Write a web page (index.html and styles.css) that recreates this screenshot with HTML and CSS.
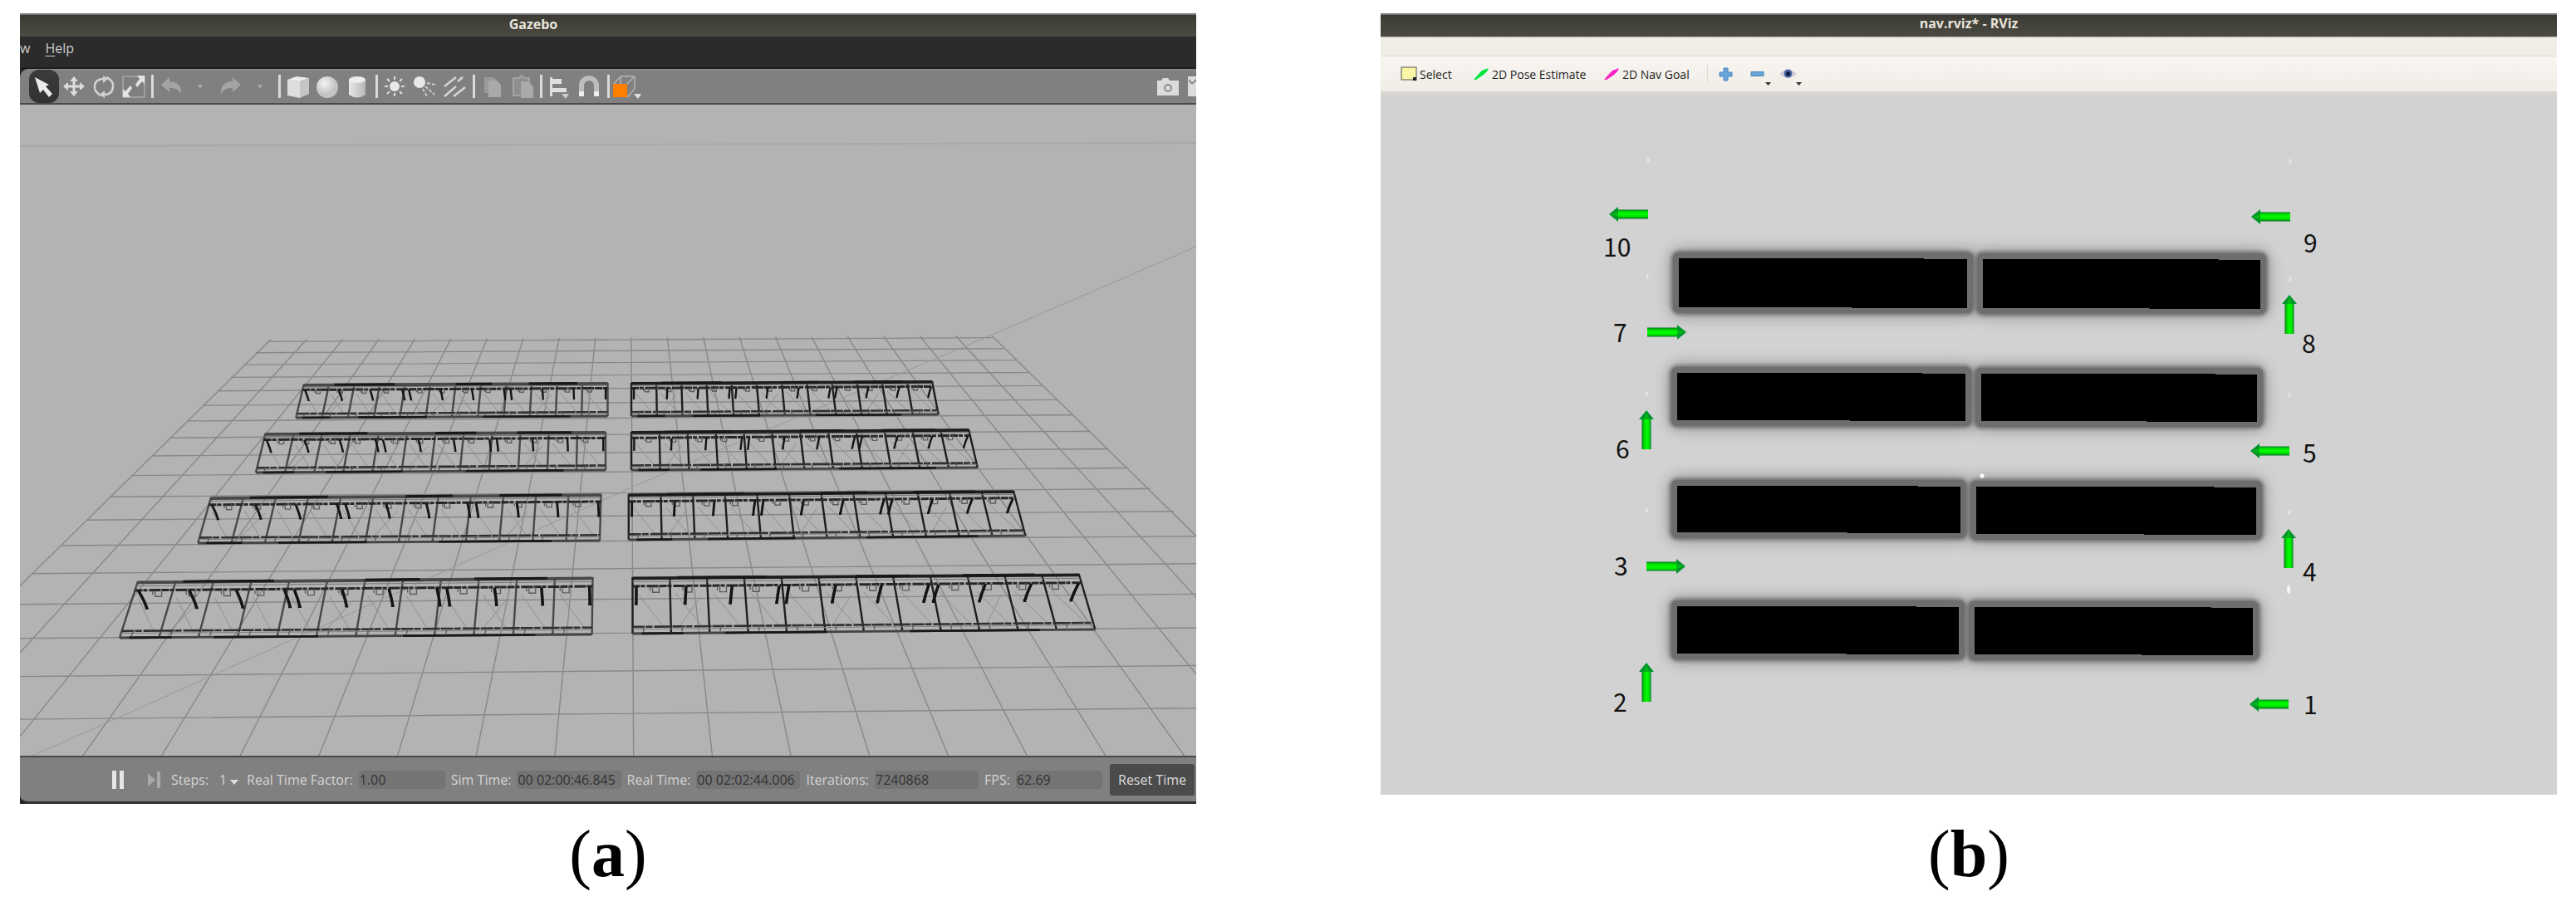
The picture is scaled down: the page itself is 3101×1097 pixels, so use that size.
FILE: index.html
```html
<!DOCTYPE html>
<html lang="en">
<head>
<meta charset="utf-8">
<title>Gazebo world and RViz map</title>
<link rel="stylesheet" href="styles.css">
</head>
<body>
<main class="figures">
  <figure class="figure">
    <section class="window gazebo" aria-label="Gazebo">
      <header class="titlebar titlebar-gazebo">Gazebo</header>
      <nav class="menubar"><a class="menu" href="#">w</a><a class="menu" href="#"><u>H</u>elp</a></nav>
      <div class="gz-shell">
      <div class="gz-toolbar">
        <div class="group">
          <button class="tool active" aria-label="Select"><svg viewBox="0 0 36 40"><path d="M7 9 24 18 20 20 28 29 24 33 17 24 13 28Z" fill="#ececec"/></svg></button>
          <button class="tool" aria-label="Translate"><svg viewBox="0 0 36 40"><g fill="#ddd"><path d="M18 8 23 14H13ZM18 32 23 26H13ZM5 20 11 15V25ZM31 20 25 15V25Z"/><path d="M16.500 12h3v16h-3zM9 18.500h18v3H9z"/></g></svg></button>
          <button class="tool" aria-label="Rotate"><svg viewBox="0 0 36 40" fill="none" stroke="#d2d2d2" stroke-width="2.500"><path d="M15 31Q6 27 7 19Q8 11 18 11M21 9Q30 13 29 21Q28 30 18 30"/><path d="M17 7 23 11 17 16ZM19 25 13 30 19 34Z" fill="#d2d2d2" stroke="none"/></svg></button>
          <button class="tool" aria-label="Scale"><svg viewBox="0 0 36 40"><path d="M5 8H31V33H5Z" fill="none" stroke="#a8a8a8" stroke-width="1.500"/><path d="M31 7V17L28 14 22 21 20 18 25 11 22 7ZM5 33V23L8 26 14 19 16 22 11 29 14 33Z" fill="#e4e4e4"/></svg></button>
        </div>
        <i class="sep"></i>
        <div class="group">
          <button class="tool" aria-label="Undo"><svg viewBox="0 0 36 40"><path d="M6 18 16 9V14Q31 15 30 29Q26 21 16 22V27Z" fill="#a4a4a4"/></svg></button>
          <button class="tool" aria-label="Undo history"><svg viewBox="0 0 36 40"><path d="M14 18h6l-3 5z" fill="#a9a9a9"/></svg></button>
          <button class="tool" aria-label="Redo"><svg viewBox="0 0 36 40"><path d="M30 18 20 9V14Q5 15 6 29Q10 21 20 22V27Z" fill="#a4a4a4"/></svg></button>
          <button class="tool" aria-label="Redo history"><svg viewBox="0 0 36 40"><path d="M14 18h6l-3 5z" fill="#a9a9a9"/></svg></button>
        </div>
        <i class="sep"></i>
        <div class="group">
          <button class="tool" aria-label="Box"><svg viewBox="0 0 36 40"><path d="M5 12 20 14V34L5 31Z" fill="#dedede"/><path d="M5 12 16 8 31 10 20 14Z" fill="#ededed"/><path d="M20 14 31 10V29L20 34Z" fill="#c6c6c6"/></svg></button>
          <button class="tool" aria-label="Sphere"><svg viewBox="0 0 36 40"><ellipse cx="17" cy="21" rx="13" ry="13" fill="url(#ball)"/></svg></button>
          <button class="tool" aria-label="Cylinder"><svg viewBox="0 0 36 40"><path d="M7 12V30Q17 37 27 30V12Z" fill="url(#tube)"/><ellipse cx="17" cy="12" rx="10" ry="4" fill="#ededed"/></svg></button>
        </div>
        <i class="sep"></i>
        <div class="group">
          <button class="tool" aria-label="Point light"><svg viewBox="0 0 36 40"><circle cx="17" cy="20" r="6" fill="#e8e8e8"/><path d="M17 8v4M17 28v4M5 20h4M25 20h4M8 11l3 3M23 26l3 3M26 11l-3 3M11 26l-3 3" stroke="#ddd" stroke-width="2"/></svg></button>
          <button class="tool" aria-label="Spot light"><svg viewBox="0 0 36 40"><circle cx="11" cy="15" r="7" fill="#e8e8e8"/><path d="M18 20 29 30M15 23 20 32M20 16 30 18" stroke="#ccc" stroke-width="2" stroke-dasharray="4 2"/></svg></button>
          <button class="tool" aria-label="Directional light"><svg viewBox="0 0 36 40"><path d="M5 20 19 9M5 32 19 20M16 32 30 21M21 14 27 9" stroke="#d5d5d5" stroke-width="2.500"/></svg></button>
        </div>
        <i class="sep"></i>
        <div class="group">
          <button class="tool" aria-label="Copy"><svg viewBox="0 0 36 40"><path d="M8 9h11l4 4v15H8Z" fill="#9b9b9b"/><path d="M13 13h10l5 5v15H13Z" fill="#a9a9a9"/></svg></button>
          <button class="tool" aria-label="Paste"><svg viewBox="0 0 36 40"><path d="M7 10h7l3-3 3 3h6V31H7Z" fill="#8e8e8e" stroke="#a3a3a3" stroke-width="2"/><path d="M16 14h9l6 6v14H16Z" fill="#a9a9a9"/></svg></button>
        </div>
        <i class="sep"></i>
        <div class="group">
          <button class="tool" aria-label="Align"><svg viewBox="0 0 36 40"><path d="M6 9h3v23H6zM9 11h11v6H9zM9 22h17v5H9z" fill="#e0e0e0"/><path d="M20 29h9l-4 6z" fill="#ccc"/></svg></button>
          <button class="tool" aria-label="Snap"><svg viewBox="0 0 36 40"><path d="M8 26V19a9 9 0 0 1 18 0V26" fill="none" stroke="#bdbdbd" stroke-width="6"/><path d="M5 26h6v6H5zM23 26h6v6h-6z" fill="#ededed"/></svg></button>
        </div>
        <i class="sep"></i>
        <div class="group">
          <button class="tool" aria-label="View angle"><svg viewBox="0 0 36 40"><path d="M2 17 10 8H27V23L18 33M18 17 27 8M10 8V17" fill="none" stroke="#b4b4b4" stroke-width="1.500"/><path d="M1 17h17v16H1z" fill="#ff8000"/><path d="M26 29h9l-4 6z" fill="#e0e0e0"/></svg></button>
        </div>
        <div class="group group-end">
          <button class="tool" aria-label="Screenshot"><svg viewBox="0 0 36 40"><path d="M5 13h5l2-3h6l2 3h11v18H5Z" fill="#dcdcdc"/><circle cx="18" cy="22" r="4" fill="none" stroke="#8d8d8d" stroke-width="2"/></svg></button>
          <button class="tool tool-cut" aria-label="Record video"><svg viewBox="0 0 36 40"><path d="M6 8h30v24H6z" fill="#dcdcdc"/><path d="M8 12q1 5 4 4l4-4" fill="none" stroke="#888" stroke-width="2"/></svg></button>
        </div>
      </div>
      <svg class="scene" id="world" viewBox="24 126 1416 784" role="img" aria-label="Simulated racks on a ground grid"></svg>
      <footer class="statusbar">
        <button class="play" aria-label="Pause"><svg viewBox="0 0 16 22"><path d="M1 0h5v22H1zM10 0h5v22h-5z" fill="#e6e6e6"/></svg></button>
        <button class="play step" aria-label="Step"><svg viewBox="0 0 16 22"><path d="M0 3 9 11 0 19ZM11 1h4v20h-4z" fill="#a8a8a8"/></svg></button>
        <label class="stat" for="steps">Steps:</label>
        <button class="steps" id="steps">1<svg viewBox="0 0 10 6"><path d="M0 0h10L5 6z" fill="#ddd"/></svg></button>
        <label class="stat" for="rtf">Real Time Factor:</label><input class="field field-s" id="rtf" value="1.00" readonly>
        <label class="stat" for="sim">Sim Time:</label><input class="field" id="sim" value="00 02:00:46.845" readonly>
        <label class="stat" for="real">Real Time:</label><input class="field" id="real" value="00 02:02:44.006" readonly>
        <label class="stat" for="iter">Iterations:</label><input class="field" id="iter" value="7240868" readonly>
        <label class="stat" for="fps">FPS:</label><input class="field field-s" id="fps" value="62.69" readonly>
        <button class="reset">Reset Time</button>
      </footer>
      </div>
    </section>
    <figcaption class="caption">(<b>a</b>)</figcaption>
  </figure>

  <figure class="figure">
    <section class="window rviz" aria-label="RViz">
      <header class="titlebar titlebar-rviz">nav.rviz* - RViz</header>
      <div class="rv-menubar"></div>
      <div class="rv-toolbar">
        <button class="rv-tool rv-select"><svg viewBox="0 0 20 18"><path d="M1 1h18v15H1z" fill="#fbf6a6" stroke="#8a8a7a" stroke-width="1.500"/><path d="M15 13h4v4h-4z" fill="#222"/></svg>Select</button>
        <button class="rv-tool rv-pose"><svg viewBox="0 0 20 18"><path d="M1 16 8 8 11 5 19 2 17 6 13 10 4 16Z" fill="#00e53c"/></svg>2D Pose Estimate</button>
        <button class="rv-tool rv-goal"><svg viewBox="0 0 20 18"><path d="M1 16 8 8 11 5 19 2 17 6 13 10 4 16Z" fill="#ff1fc4"/></svg>2D Nav Goal</button>
        <i class="rv-sep"></i>
        <button class="rv-icon" aria-label="Add"><svg viewBox="0 0 36 30"><path d="M14 8h5v5h5v5h-5v5h-5v-5h-5v-5h5z" fill="#6aa5d8" stroke="#4b87bd"/></svg></button>
        <button class="rv-icon" aria-label="Remove"><svg viewBox="0 0 36 30"><path d="M10 12.500h15v5H10z" fill="#6aa5d8" stroke="#4b87bd"/><path d="M27 25h7l-3.500 4z" fill="#333"/></svg></button>
        <button class="rv-icon" aria-label="Views"><svg viewBox="0 0 36 30"><path d="M8 15Q17 6 27 15Q17 24 8 15Z" fill="#dcdce4" stroke="#b5b5bd"/><circle cx="17.500" cy="14.500" r="5" fill="#4a63a8"/><circle cx="17.500" cy="15" r="2.500" fill="#101838"/><path d="M27 25h7l-3.500 4z" fill="#333"/></svg></button>
      </div>
      <svg class="scene" id="map" viewBox="1662 114 1416 843" role="img" aria-label="Cost map with ten numbered goals"></svg>
    </section>
    <figcaption class="caption">(<b>b</b>)</figcaption>
  </figure>
</main>
<svg width="0" height="0" class="defs" aria-hidden="true"><defs>
  <radialGradient id="ball" cx=".38" cy=".32"><stop offset="0" stop-color="#f4f4f4"/><stop offset="1" stop-color="#c4c4c4"/></radialGradient>
  <linearGradient id="tube"><stop offset="0" stop-color="#e8e8e8"/><stop offset="1" stop-color="#b6b6b6"/></linearGradient>
  <linearGradient id="shaft" x2="0" y2="1"><stop offset="0" stop-color="#006c22"/><stop offset=".2" stop-color="#00d000"/><stop offset=".5" stop-color="#00ff00"/><stop offset=".8" stop-color="#00dc00"/><stop offset="1" stop-color="#007a28"/></linearGradient>
  <filter id="glow" x="-10%" y="-50%" width="120%" height="200%"><feGaussianBlur stdDeviation="9"/></filter>
  <filter id="soft" x="-10%" y="-50%" width="120%" height="200%"><feGaussianBlur stdDeviation="2"/></filter>
</defs></svg>
<script src="scenes.js"></script>
</body>
</html>
```
FILE: styles.css
```css
* { box-sizing: border-box; }

body {
  margin: 0;
  background: #fff;
  font-family: "Open Sans", "Noto Sans", sans-serif;
  font-size: 16px;
}

button { border: 0; padding: 0; background: none; font: inherit; color: inherit; }
.defs { position: absolute; }

.figures {
  display: grid;
  grid-template-columns: 1fr 1fr;
  gap: 222px;
  padding: 16px 23px 0 24px;
}

.figure {
  margin: 0;
  min-width: 0;
  display: flex;
  flex-direction: column;
  justify-content: space-between;
}

.window { overflow: hidden; }
.scene { display: block; width: 100%; height: auto; }

.titlebar {
  height: 28px;
  border-top: 2px solid #777;
  background: linear-gradient(#3b3a34, #4b4a42);
  color: #e8e4da;
  font-weight: 700;
  line-height: 20px;
  text-align: center;
}
.titlebar-gazebo { padding-right: 180px; line-height: 22px; }

/* Gazebo */
.menubar {
  display: flex;
  gap: 18px;
  height: 39px;
  background: #2b2b2b;
  border-bottom: 2px solid #1e1e1e;
}
.menu { color: #cfcfcf; text-decoration: none; line-height: 28px; }
.menu u { text-underline-offset: 3px; }

.gz-shell { background: #222; }

.gz-toolbar {
  display: flex;
  align-items: center;
  height: 43px;
  padding: 0 0 0 11px;
  background: linear-gradient(#8a8a8a, #808080 4px, #808080);
  border-bottom: 2px solid #4a4a4a;
  border-radius: 10px 0 0 0;
}
.group { display: flex; }
.group-end { margin-left: auto; }
.tool { width: 36px; height: 40px; }
.tool svg { display: block; width: 36px; height: 40px; }
.tool-cut { width: 16px; overflow: hidden; }
.active { background: linear-gradient(#3a3a3a, #333); border-radius: 12px; }
.sep { width: 3px; height: 28px; margin: 0 3px; background: #dadada; }

#world { background: #b3b3b3; }

.statusbar {
  display: flex;
  align-items: center;
  gap: 7px;
  height: 58px;
  padding: 0 2px 0 110px;
  background: #808080;
  border-top: 2px solid #484848;
  border-bottom: 3px solid #303030;
  border-radius: 0 0 0 10px;
  color: #d4d4d4;
}
.play { width: 16px; height: 22px; margin-right: 21px; }
.play svg { display: block; width: 16px; height: 22px; }
.step { margin-right: 5px; }
.stat { white-space: nowrap; }
.steps { display: flex; align-items: center; gap: 4px; width: 32px; padding-left: 6px; }
.steps svg { width: 10px; height: 6px; margin-top: 6px; }
.field {
  flex: 1 1 122px;
  min-width: 0;
  height: 22px;
  border: 0;
  border-radius: 4px;
  padding: 0 0 0 1px;
  background: #747474;
  color: #333;
  font: inherit;
}
.field-s { flex-basis: 101px; }
.reset {
  width: 102px;
  height: 38px;
  margin-left: 2px;
  border-radius: 3px;
  background: #4b4b4b;
  color: #dedede;
  white-space: nowrap;
}

/* RViz */
.rv-menubar { height: 24px; background: #f0ede6; border-top: 1px solid #b5b0a8; border-bottom: 1px solid #dedad2; }
.rv-toolbar {
  display: flex;
  align-items: center;
  height: 46px;
  padding-left: 24px;
  background: linear-gradient(#f9f6f2, #f0ece6);
  border-bottom: 4px solid #dad5d0;
  color: #222;
  font-size: 14px;
}
.rv-tool { display: flex; align-items: center; gap: 3px; white-space: nowrap; }
.rv-tool svg { width: 20px; height: 18px; }
.rv-select { width: 87px; }
.rv-pose { width: 157px; }
.rv-goal { width: 125px; }
.rv-sep { width: 1px; height: 22px; background: #dfdbd4; margin-right: 5px; }
.rv-icon { width: 37px; height: 30px; }
.rv-icon svg { display: block; width: 36px; height: 30px; }

#map { background: #d2d2d2; }
.goal { font: 30px "Noto Sans CJK SC", "Noto Sans", sans-serif; fill: #111; }

.caption {
  font: 80px/92px "Liberation Serif", serif;
  text-align: center;
  color: #000;
  padding-top: 14px;
}
```
FILE: scenes.js
```js
const NS = "http://www.w3.org/2000/svg";

function add(parent, tag, attrs, text) {
  const el = document.createElementNS(NS, tag);
  for (const key in attrs) el.setAttribute(key, attrs[key]);
  if (text !== undefined) el.textContent = text;
  parent.appendChild(el);
  return el;
}

/* Gazebo world: ground grid, horizon and two columns of racks */
const world = document.getElementById("world");
let grid = "";
for (let i = -10; i <= 10; i++) {
  grid += `M${760 + 43.4 * i} ${406.5 - 0.23 * i}L${762.7 + 94.8 * i} 911`;
}
for (let n = 0; n <= 17; n++) {
  const y = -16 + 14046 / (33.05 - n);
  const slope = -(0.0054 + 0.00024 * n);
  const left = 324 - (y - 406.5) * 1.025;
  const right = 1192 + (y - 406.5) * 1.03;
  grid += `M${left} ${y + slope * (left - 760)}L${right} ${y + slope * (right - 760)}`;
}
add(world, "path", { d: "M24 176L1440 172", stroke: "#a8a8a8", "stroke-width": 2, fill: "none" });
add(world, "path", { d: grid, stroke: "#888", "stroke-width": 1.4, fill: "none" });
add(world, "path", { d: "M1440 297L1192 404L760 587L330 780L107 880L39 910", stroke: "#999", fill: "none" });

const ARM = [0.1, 0.43, 0.66, 0.92];
const BRACKET = [0.62, 0.5, 0.42, 0.3];

/* corners: top-left, top-right, bottom-left, bottom-right */
function rack([ax, ay, bx, by, cx, cy, dx, dy], tone) {
  const at = (u, v) => {
    const tx = ax + (bx - ax) * u, ty = ay + (by - ay) * u;
    const ex = cx + (dx - cx) * u, ey = cy + (dy - cy) * u;
    return [tx + (ex - tx) * v, ty + (ey - ty) * v];
  };
  const line = (u1, v1, u2, v2) => `M${at(u1, v1)}L${at(u2, v2)}`;
  const h = cy - ay;
  const k = h / 69;
  let posts = "", faint = "", arms = "", boxes = "";
  for (let i = 0; i <= 12; i++) posts += line(i / 12, 0, i / 12, 1);
  for (let i = 0; i < 12; i++) {
    const j = i % 4;
    const u = (i + ARM[j] + (i > 3 && j === 0 ? 0.08 : 0)) / 12;
    const [px, py] = at(u, 0.17);
    const lean = (at(u, 0)[0] - at(u, 1)[0]) * 0.5;
    arms += `M${px} ${py}l${lean * 0.6} ${h * 0.18}l${lean * 0.3} ${h * 0.12}l${-2 * k} 0`;
    const [qx, qy] = at((i + BRACKET[j]) / 12, 0.17);
    boxes += `M${qx - 4 * k} ${qy}v${7 * k}h${8 * k}v${-8 * k}M${qx - 7 * k} ${qy + 1}v${4 * k}`;
    faint += line((i + 0.15) / 12, 0.3, (i + 0.85) / 12, 0.92);
    if (j === 1) faint += line((i + 0.8) / 12, 0.35, (i + 0.2) / 12, 0.9);
    boxes += line((i + 0.3) / 12, 0.88, (i + 0.28) / 12, 0.97);
  }
  const g = add(world, "g", { fill: "none" });
  add(g, "path", { d: faint, stroke: "#8f8f8f" });
  add(g, "path", { d: posts, stroke: tone, "stroke-width": 2.4 });
  add(g, "path", { d: line(0, 0.02, 1, 0.02), stroke: tone, "stroke-width": 3.8 });
  add(g, "path", { d: line(0.1, 0.01, 0.3, 0.01) + line(0.5, 0.01, 0.62, 0.01) + line(0.74, 0.01, 0.9, 0.01), stroke: "#181818", "stroke-width": 3 });
  add(g, "path", { d: line(0, 0.08, 1, 0.08), stroke: "#777", "stroke-width": 1 });
  add(g, "path", { d: line(0, 0.16, 1, 0.16), stroke: "#262626", "stroke-width": 3, "stroke-dasharray": "9 1 5 2 14 1" });
  add(g, "path", { d: line(0, 0.88, 1, 0.88), stroke: "#303030", "stroke-width": 2.6, "stroke-dasharray": "15 1 8 2 21 1" });
  add(g, "path", { d: line(0, 0.92, 1, 0.92), stroke: "#808080", "stroke-width": 1 });
  add(g, "path", { d: line(0, 1, 1, 1), stroke: "#444", "stroke-width": 2.8 });
  add(g, "path", { d: line(0.02, 1, 0.11, 1) + line(0.2, 1, 0.42, 1) + line(0.6, 1, 0.88, 1), stroke: "#181818", "stroke-width": 2.6 });
  add(g, "path", { d: boxes, stroke: "#5e5e5e", "stroke-width": 1.4 });
  add(g, "path", { d: arms, stroke: "#141414", "stroke-width": Math.max(2.4, 3.6 * k) });
}

const LEFT = "#484848", RIGHT = "#1e1e1e";
rack([365.7, 463, 731.5, 461, 356.3, 503, 731.5, 501], LEFT);
rack([319.5, 522, 729, 520, 308, 569, 729, 566], LEFT);
rack([254, 599, 723.5, 595, 238.3, 654, 722, 651], LEFT);
rack([166, 700, 713.5, 695, 144, 768, 712.6, 764], LEFT);
rack([760, 461, 1122, 459, 760, 501, 1129.6, 499], RIGHT);
rack([760, 520, 1166, 517, 760, 566, 1176.8, 563], RIGHT);
rack([756.8, 595, 1220, 591, 756.8, 650, 1234.4, 645], RIGHT);
rack([761.5, 695, 1298.6, 691, 761.5, 763, 1318.4, 758], RIGHT);

/* RViz cost map: [left, top, right, bottom] of each obstacle */
const map = document.getElementById("map");
const blocks = [
  [2021, 311, 2368, 370], [2387, 312, 2721, 371],
  [2019, 449, 2366, 506], [2385, 450, 2717, 507],
  [2019, 585, 2360, 641], [2379, 586, 2716, 643],
  [2019, 730, 2358, 787], [2377, 731, 2712, 788],
];
const around = ([l, t, r, b], m) => ({ x: l - m, y: t - m, width: r - l + 2 * m, height: b - t + 2 * m, rx: m });
for (const b of blocks) add(map, "rect", { ...around(b, 10), fill: "#777", opacity: 0.75, filter: "url(#glow)" });
for (const b of blocks) add(map, "rect", { ...around(b, 9), fill: "#707070", filter: "url(#soft)" });
for (const b of blocks) add(map, "rect", { ...around(b, 7), fill: "#6e6e6e" });
for (const [l, t, r, b] of blocks) {
  const s = l + (r - l) * 0.85, e = l + (r - l) * 0.6;
  add(map, "path", { d: `M${l} ${t}H${s}V${t + 1}H${r}V${b + 1}H${e}V${b}H${l}Z`, fill: "#000" });
}

const dots = [[1984, 193], [1983, 333], [1982, 474], [1982, 614], [2757, 194], [2757, 336], [2756, 476], [2756, 617]];
for (const [x, y] of dots) add(map, "ellipse", { cx: x, cy: y, rx: 1.5, ry: 3, fill: "#e6e6e6" });
add(map, "circle", { cx: 2386, cy: 573, r: 2.5, fill: "#fff" });
add(map, "ellipse", { cx: 2755, cy: 710, rx: 2, ry: 5, fill: "#f6f6f6" });

/* goals: number, text x, baseline, arrow tail x, tail y, heading */
const goals = [
  [1, 2773, 860, 2755, 848, 180], [2, 1942, 857, 1982, 845, 270],
  [3, 1943, 693, 1982, 682, 0], [4, 2772, 700, 2755, 684, 270],
  [5, 2772, 557, 2756, 543, 180], [6, 1945, 552, 1982, 541, 270],
  [7, 1942, 412, 1983, 400, 0], [8, 2771, 425, 2756, 402, 270],
  [9, 2773, 304, 2757, 261, 180], [10, 1930, 309, 1984, 258, 180],
];
for (const [n, tx, ty, x, y, turn] of goals) {
  const g = add(map, "g", { transform: `translate(${x} ${y}) rotate(${turn})` });
  add(g, "rect", { x: 0, y: -5.5, width: 37, height: 11, fill: "url(#shaft)" });
  add(g, "path", { d: "M36 -9L47 0L36 9Z", fill: "#00952a" });
  add(g, "path", { d: "M36 -3L45 0L36 3Z", fill: "#00b818" });
  add(map, "text", { x: tx, y: ty, class: "goal" }, n);
}
```
